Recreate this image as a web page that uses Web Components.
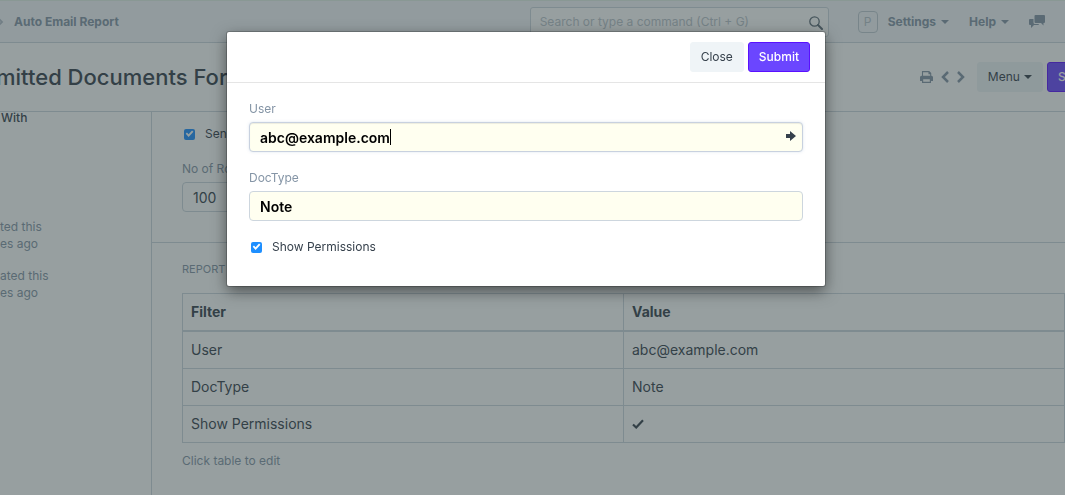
<!DOCTYPE html>
<html lang="en">
<head>
<meta charset="utf-8">
<meta name="viewport" content="width=device-width, initial-scale=1">
<title>Auto Email Report</title>
<style>
html { height: 100%; }
body {
  --text: #36414c; --muted: #8595a6; --line: #cdd6de; --soft: #eff4f7; --primary: #6b46ff;
  margin: 0; min-height: 100%; overflow: hidden; background: #fff;
  font: 14px/20px Inter, "Liberation Sans", sans-serif; color: var(--text);
}
</style>
</head>
<body>
<email-report-app></email-report-app>
<script>
const define = (name, html, setup) => customElements.define(name, class extends HTMLElement {
  constructor() {
    super();
    const t = document.createElement('template');
    t.innerHTML = html;
    this.attachShadow({ mode: 'open' }).append(t.content.cloneNode(true));
  }
  connectedCallback() { if (setup) setup(this, this.shadowRoot); }
});

const icons = {
  search: [14, 14, '<circle cx="5.5" cy="5.5" r="4.7" fill="none" stroke="currentColor" stroke-width="1.3"/><path d="M9 9l4 4" stroke="currentColor" stroke-width="2" stroke-linecap="round"/>'],
  caret: [8, 4, '<path d="M0 0h8L4 4z"/>'],
  chat: [16, 14, '<path d="M6.500 0h8.500q1 0 1 1v6q0 1-1 1h-.5v2.500L12 8H6.500q-1 0-1-1V1q0-1 1-1z"/><path d="M4.500 4H1Q0 4 0 5v4q0 1 1 1h1v3l3-3h4q1 0 1-1H6Q4.500 9 4.500 7.500z"/>'],
  print: [13, 12, '<path d="M2.500 5V.6h6.500l1.700 1.700V5M9 .6v2h1.700" fill="none" stroke="currentColor" stroke-width="1.100"/><path fill-rule="evenodd" d="M1.500 4.800h10Q13 4.800 13 6.300V10h-2v2H2v-2H0V6.300Q0 4.800 1.500 4.800zM3.200 8.300v2.500h6.600V8.300z"/>'],
  left: [8, 12, '<path d="M7 1L2 6l5 5" fill="none" stroke="currentColor" stroke-width="2.500"/>'],
  right: [8, 12, '<path d="M1 1l5 5-5 5" fill="none" stroke="currentColor" stroke-width="2.500"/>'],
  arrow: [10, 10, '<path d="M0 3h4V0l6 5-6 5V7H0z"/>'],
  crumb: [6, 8, '<path d="M1 1l3 3-3 3" fill="none" stroke="currentColor" stroke-width="1.800" opacity=".6"/>'],
  check: [12, 10, '<path d="M1 5.500L4.200 8.500 11 1.200" fill="none" stroke="currentColor" stroke-width="2.200"/>']
};
define('ui-icon', '<style>:host{display:inline-flex;flex:none}svg{display:block;fill:currentColor}</style>', (el, root) => {
  const [w, h, body] = icons[el.getAttribute('name')];
  root.innerHTML += `<svg width="${w}" height="${h}" viewBox="0 0 ${w} ${h}" aria-hidden="true">${body}</svg>`;
});

define('ui-button', `<style>
  :host{display:inline-block;flex:none}
  button{display:flex;align-items:center;gap:4px;height:30px;padding:0 10px;border:1px solid var(--soft);border-radius:3px;background:var(--soft);color:var(--text);font:12px/18px Inter,sans-serif;white-space:nowrap}
  :host([primary]) button{background:var(--primary);border-color:#5a10ff;color:#fff;font-weight:500}
</style><button type="button"><slot></slot></button>`);

define('ui-check', `<style>
  :host{display:block}
  label{display:flex;align-items:center;gap:10px;font-size:12px;line-height:18px;white-space:nowrap}
  input{appearance:none;display:grid;place-items:center;width:11px;height:11px;margin:0;border-radius:2px;background:#1e8fff}
  input:checked::before{content:"";width:9px;height:9px;background:#fff;clip-path:polygon(8% 48%,22% 34%,40% 54%,78% 12%,94% 26%,40% 84%)}
</style><label><input type="checkbox" checked><slot></slot></label>`);

define('ui-field', `<style>
  :host{display:block}
  label{display:block;font-size:12px;line-height:18px;color:var(--muted);margin-bottom:4px;white-space:nowrap}
  .box{position:relative}
  input{box-sizing:border-box;display:block;width:100%;height:30px;padding:0 10px;border:1px solid var(--line);border-radius:4px;background:transparent;color:var(--text);font:14px/20px Inter,sans-serif;outline:0}
  :host([required]) input{background:#fffff0;color:#000;font-weight:600}
  :host([active]) input{border-color:#c8d1df;box-shadow:inset 0 1px 1px #00000013,0 0 3px #8fa8c94d}
  ui-icon,.caret{display:none;position:absolute}
  :host([active]) ui-icon{display:block;right:7px;top:9px}
  :host([active]) .caret{display:block;left:141px;top:7px;width:1px;height:16px;background:#000}
</style><label for="value"></label><div class="box"><input id="value"><span class="caret"></span><ui-icon name="arrow"></ui-icon></div>`,
(el, root) => {
  root.querySelector('label').textContent = el.getAttribute('label');
  root.querySelector('input').value = el.getAttribute('value');
});

define('app-navbar', `<style>
  :host{display:flex;align-items:center;height:42px;box-sizing:border-box;padding-right:20px;background:#f4f7fa;border-bottom:1px solid var(--line);color:var(--muted);font-size:12px;font-weight:700}
  nav{flex:1;display:flex;align-items:center;gap:10px;margin-left:-2px}
  a{display:flex;align-items:center;gap:5px;color:inherit;text-decoration:none;white-space:nowrap}
  .search{position:relative;width:299px}
  input{box-sizing:border-box;display:block;width:100%;height:30px;padding:0 9px;border:1px solid var(--line);border-radius:3px;background:#fff;font:12px/18px Inter,sans-serif}
  input::placeholder{color:#bcc5cc}
  .search ui-icon{position:absolute;right:6px;top:9px;color:#5e6c78}
  .avatar{box-sizing:border-box;width:20px;height:22px;margin-left:29px;border:1px solid #c0cad3;border-radius:4px;display:grid;place-items:center;font-weight:400;color:#b8c2cb}
  .settings{margin-left:10px}.help{margin-left:20px}.chat{margin-left:20px}
</style>
<nav aria-label="Breadcrumb"><ui-icon name="crumb"></ui-icon><a href="#">Auto Email Report</a></nav>
<div class="search"><input type="search" aria-label="Search" placeholder="Search or type a command (Ctrl + G)"><ui-icon name="search"></ui-icon></div>
<span class="avatar">P</span>
<a class="settings" href="#">Settings <ui-icon name="caret"></ui-icon></a>
<a class="help" href="#">Help <ui-icon name="caret"></ui-icon></a>
<a class="chat" href="#" aria-label="Chat"><ui-icon name="chat"></ui-icon></a>`);

define('page-head', `<style>
  :host{display:flex;align-items:center;height:69px;box-sizing:border-box;border-bottom:1px solid var(--line)}
  h1{flex:1;min-width:0;margin:0 0 0 -4px;font-size:22px;line-height:30px;font-weight:500;white-space:nowrap}
  .actions{display:flex;align-items:center;gap:4px;margin-right:-32px}
  .tool{display:flex;border:0;padding:0 4px 0 0;background:none;color:var(--muted)}
  .last{padding-right:8px}
</style>
<h1>mitted Documents For</h1>
<div class="actions">
  <button class="tool" aria-label="Print"><ui-icon name="print"></ui-icon></button>
  <button class="tool" aria-label="Previous"><ui-icon name="left"></ui-icon></button>
  <button class="tool last" aria-label="Next"><ui-icon name="right"></ui-icon></button>
  <ui-button>Menu <ui-icon name="caret"></ui-icon></ui-button>
  <ui-button primary>Save</ui-button>
</div>`);

define('form-sidebar', `<style>
  :host{display:block;box-sizing:border-box;width:152px;flex:none;border-right:1px solid var(--line);font-size:12px;line-height:17px;color:var(--muted)}
  h2{margin:-3px 0 91px 1px;font-size:12px;line-height:18px;font-weight:500;color:var(--text)}
  p{margin:0 0 15px}
</style><h2>With</h2><p>ted this<br>es ago</p><p>ated this<br>es ago</p>`);

define('filter-table', `<style>
  :host{display:block}
  table{width:100%;border-collapse:collapse;table-layout:fixed}
  th,td{height:20px;padding:8px;border:1px solid var(--line);text-align:left;line-height:20px}
  th{font-weight:700;border-bottom-width:2px}
  p{margin:9px 0 0;font-size:12px;line-height:18px;color:var(--muted)}
</style><table><thead><tr><th>Filter</th><th>Value</th></tr></thead><tbody>
<tr><td>User</td><td>abc@example.com</td></tr><tr><td>DocType</td><td>Note</td></tr>
<tr><td>Show Permissions</td><td><ui-icon name="check"></ui-icon></td></tr></tbody></table><p>Click table to edit</p>`);

define('form-section', `<style>
  :host{display:block;padding:0 0 0 30px;border-bottom:1px solid var(--line)}
  :host(:last-of-type){border:0}
</style><slot></slot>`);

define('report-dialog', `<style>
  :host{position:fixed;inset:0;display:flex;justify-content:center;align-items:flex-start;padding:32px 13px 0 0;background:#2f404280}
  section{box-sizing:border-box;width:598px;max-width:100%;background:#fff;border-radius:2px;box-shadow:0 0 0 1px #0003,0 5px 15px #00000080;padding-bottom:30px}
  header{display:flex;justify-content:flex-end;gap:4px;padding:10px 15px;border-bottom:1px solid #e5e5e5}
  .body{display:grid;gap:17px;padding:17px 22px 0}
  ui-check{padding-left:2px}
</style><section role="dialog" aria-modal="true" aria-label="Edit filters">
<header><ui-button>Close</ui-button><ui-button primary>Submit</ui-button></header>
<div class="body"><ui-field label="User" value="abc@example.com" required active></ui-field>
<ui-field label="DocType" value="Note" required></ui-field><ui-check>Show Permissions</ui-check></div></section>`);

define('email-report-app', `<style>
  :host{display:block;border-top:1px solid #e2f0e6}
  .layout{display:flex;min-height:calc(100vh - 112px)}
  main{flex:1;min-width:0}
  .settings{padding-top:13px;padding-bottom:30px}
  .settings ui-check{padding-left:2px;margin-bottom:17px}
  .settings ui-field{width:45%}
  h3{margin:0;padding:17px 0 15px;font-size:11px;line-height:18px;font-weight:400;color:var(--muted);text-transform:uppercase}
</style>
<app-navbar></app-navbar><page-head></page-head>
<div class="layout"><form-sidebar></form-sidebar><main>
<form-section class="settings"><ui-check>Send</ui-check><ui-field label="No of Rows" value="100"></ui-field></form-section>
<form-section><h3>Report</h3><filter-table></filter-table></form-section>
</main></div><report-dialog></report-dialog>`);
</script>
</body>
</html>
